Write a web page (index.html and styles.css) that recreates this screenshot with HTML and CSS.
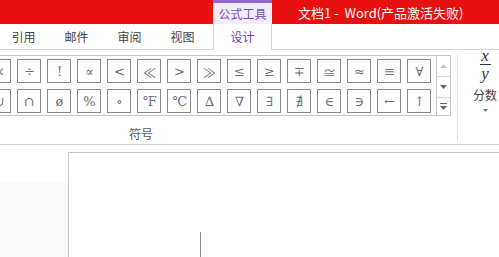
FILE: index.html
```html
<!DOCTYPE html>
<html lang="zh-CN">
  <head>
    <meta charset="UTF-8" />
    <title>文档1 - Word(产品激活失败)</title>
    <link rel="stylesheet" href="styles.css">
  </head>
  <body>
    <div class="window">
      <div class="titlebar">
        <div class="ctx-tab">公式工具</div>
        <div class="title">文档1 -  Word(产品激活失败)</div>
      </div>
      <div class="tabs">
        <div class="tab">引用</div>
        <div class="tab">邮件</div>
        <div class="tab">审阅</div>
        <div class="tab">视图</div>
        <div class="tab active">设计</div>
      </div>
      <div class="ribbon">
        <div class="group">
          <div class="gallery">
            <div class="symbols">
              <div class="grid">
                <span class="sym">×</span><span class="sym">÷</span><span class="sym">!</span><span class="sym">∝</span><span class="sym">&lt;</span><span class="sym">≪</span><span class="sym">&gt;</span><span class="sym">≫</span><span class="sym">≤</span><span class="sym">≥</span><span class="sym">∓</span><span class="sym">≅</span><span class="sym">≈</span><span class="sym">≡</span><span class="sym">∀</span>
                <span class="sym">∪</span><span class="sym">∩</span><span class="sym">ø</span><span class="sym">%</span><span class="sym">∘</span><span class="sym">°F</span><span class="sym">°C</span><span class="sym">∆</span><span class="sym">∇</span><span class="sym">∃</span><span class="sym">∄</span><span class="sym">∈</span><span class="sym">∋</span><span class="sym">←</span><span class="sym">↑</span>
              </div>
            </div>
            <div class="scroller">
              <div class="seg">
                <svg width="7" height="4" viewBox="0 0 7 4"><path d="M0 4 L3.5 0 L7 4 Z" fill="#c8c8c8"/></svg>
              </div>
              <div class="seg">
                <svg width="7" height="4" viewBox="0 0 7 4"><path d="M0 0 L3.5 4 L7 0 Z" fill="#666"/></svg>
              </div>
              <div class="seg last">
                <svg width="7" height="7" viewBox="0 0 7 7"><rect x="0" y="0" width="7" height="1" fill="#666"/><path d="M0 3 L3.5 7 L7 3 Z" fill="#666"/></svg>
              </div>
            </div>
          </div>
          <div class="group-label">符号</div>
        </div>
        <div class="separator"></div>
        <div class="fraction">
          <div class="frac">
            <span class="num">x</span>
            <span class="bar"></span>
            <span class="den">y</span>
          </div>
          <div class="frac-label">分数</div>
          <svg width="5" height="3" viewBox="0 0 5 3"><path d="M0 0 L2.5 3 L5 0 Z" fill="#777"/></svg>
        </div>
      </div>
      <div class="document">
        <div class="margin-side"></div>
        <div class="page">
          <div class="caret"></div>
        </div>
      </div>
    </div>
  </body>
</html>
```

FILE: styles.css
```css
body {
  margin: 0;
  background-color: #ffffff;
  font-family: "Noto Sans CJK SC", "Noto Sans", sans-serif;
  font-size: 12px;
  color: #444444;
}
.window {
  width: 499px;
  height: 257px;
  overflow: hidden;
  display: flex;
  flex-direction: column;
}
.titlebar {
  height: 24px;
  flex-shrink: 0;
  background-color: #e81010;
  display: flex;
  align-items: stretch;
  padding-left: 213px;
}
.ctx-tab {
  width: 59px;
  box-sizing: border-box;
  background-color: #f2ecf9;
  border-top: 3px solid #9166cc;
  color: #7a4cc0;
  display: flex;
  align-items: center;
  justify-content: center;
  line-height: 1;
}
.title {
  color: #ffffff;
  margin-left: 26px;
  display: flex;
  align-items: center;
  line-height: 1;
  font-size: 13px;
  white-space: pre;
}
.tabs {
  height: 25px;
  flex-shrink: 0;
  display: flex;
  border-bottom: 1px solid #d6d6d6;
  margin-left: -3px;
}
.tab {
  width: 53px;
  display: flex;
  align-items: center;
  justify-content: center;
  line-height: 1;
}
.tab.active {
  width: 59px;
  margin-left: 4px;
  box-sizing: border-box;
  border-left: 1px solid #d6d6d6;
  border-right: 1px solid #d6d6d6;
  background-color: #ffffff;
  height: 26px;
  color: #7040b8;
}
.ribbon {
  flex-shrink: 0;
  display: flex;
  border-bottom: 1px solid #d6d6d6;
  padding-top: 5px;
  box-sizing: border-box;
  height: 95px;
}
.group {
  display: flex;
  flex-direction: column;
}
.gallery {
  width: 451px;
  box-sizing: border-box;
  height: 61px;
  border-top: 1px solid #c6c6c6;
  border-bottom: 1px solid #c6c6c6;
  border-right: 1px solid #c6c6c6;
  display: flex;
}
.symbols {
  width: 436px;
  overflow: hidden;
  padding-top: 3px;
}
.grid {
  margin-left: -13px;
  display: grid;
  grid-template-columns: repeat(15, 24px);
  grid-auto-rows: 24px;
  gap: 6px;
}
.sym {
  box-sizing: border-box;
  border: 1px solid #8a8a8a;
  display: flex;
  align-items: center;
  justify-content: center;
  font-family: "DejaVu Serif", serif;
  font-size: 13px;
  letter-spacing: -1px;
  color: #686e78;
}
.scroller {
  width: 14px;
  box-sizing: border-box;
  border-left: 1px solid #c6c6c6;
  display: flex;
  flex-direction: column;
}
.seg {
  height: 20px;
  border-bottom: 1px solid #d8d8d8;
  display: flex;
  align-items: center;
  justify-content: center;
}
.seg.last {
  flex: 1;
  border-bottom: none;
}
.group-label {
  margin-left: 129px;
  margin-top: 12px;
  line-height: 1;
  color: #555555;
}
.separator {
  width: 1px;
  height: 86px;
  background-color: #e0e0e0;
  margin-left: 6px;
}
.fraction {
  flex: 1;
  display: flex;
  flex-direction: column;
  align-items: center;
  padding-left: 13px;
}
.frac {
  display: flex;
  flex-direction: column;
  align-items: center;
  font-family: "Liberation Serif", serif;
  font-style: italic;
  font-size: 17px;
  color: #333333;
  line-height: 12px;
  margin-top: -5px;
}
.bar {
  width: 11px;
  height: 1px;
  background-color: #333333;
  margin: 2px 0 3px;
}
.frac-label {
  line-height: 1;
  margin-top: 9px;
  margin-bottom: 8px;
  color: #444444;
}
.document {
  flex: 1;
  display: flex;
}
.margin-side {
  width: 68px;
  margin-top: 38px;
  background-color: #fafafa;
}
.page {
  flex: 1;
  margin-top: 7px;
  border-top: 1px solid #c6c6c6;
  border-left: 1px solid #c6c6c6;
  background-color: #ffffff;
  padding-left: 131px;
  padding-top: 79px;
}
.caret {
  width: 1px;
  height: 30px;
  background-color: #8a8a8a;
}
```
